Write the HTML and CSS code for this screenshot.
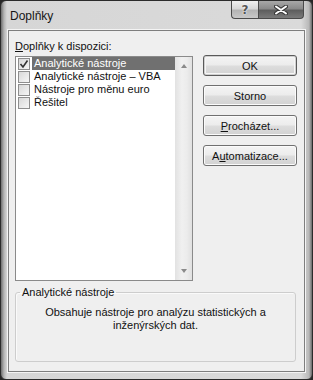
FILE: index.html
```html
<!DOCTYPE html>
<html>
  <head>
    <title>Doplňky</title>
    <link rel="stylesheet" href="styles.css">
  </head>
  <body>

	<div class="window">
		<div class="titlebar">
			<span class="title">Doplňky</span>
			<div class="caption">
				<span class="cap-btn help">?</span>
				<span class="cap-btn close">
					<svg width="14" height="10" viewBox="0 0 14 10">
						<path d="M2 1.5 L12 8.5 M12 1.5 L2 8.5" stroke="#3a3a3a" stroke-width="4" stroke-linecap="round"/>
						<path d="M2 1.5 L12 8.5 M12 1.5 L2 8.5" stroke="#fff" stroke-width="2" stroke-linecap="round"/>
					</svg>
				</span>
			</div>
		</div>

		<div class="client">
			<div class="top">
				<div class="left">
					<div class="label"><u>D</u>oplňky k dispozici:</div>
					<div class="listbox">
						<ul class="items">
							<li class="item selected">
								<span class="check">
									<svg width="10" height="10" viewBox="0 0 10 10">
										<path d="M1.5 5 L4 8 L8.5 1.5" fill="none" stroke="#333" stroke-width="1.6"/>
									</svg>
								</span>
								<span class="text">Analytické nástroje</span>
							</li>
							<li class="item"><span class="check"></span><span class="text">Analytické nástroje – VBA</span></li>
							<li class="item"><span class="check"></span><span class="text">Nástroje pro měnu euro</span></li>
							<li class="item"><span class="check"></span><span class="text">Řešitel</span></li>
						</ul>
						<div class="scrollbar">
							<span class="arrow up"></span>
							<span class="arrow down"></span>
						</div>
					</div>
				</div>
				<div class="buttons">
					<button class="btn default">OK</button>
					<button class="btn">Storno</button>
					<button class="btn"><u>P</u>rocházet...</button>
					<button class="btn">A<u>u</u>tomatizace...</button>
				</div>
			</div>

			<fieldset class="group">
				<legend>Analytické nástroje</legend>
				<p class="desc">Obsahuje nástroje pro analýzu statistických a<br>inženýrských dat.</p>
			</fieldset>
		</div>
	</div>

  </body>
</html>
```

FILE: styles.css
```css
body { margin: 0; background: #262626; font-family: "Liberation Sans", Arial, sans-serif; font-size: 11px; color: #111; }

.window { width: 313px; height: 380px; box-sizing: border-box; border: 1px solid #2b2b2b; border-radius: 6px; display: flex; flex-direction: column; overflow: hidden;
	background: linear-gradient(to right, #6e6e6e 0, #b4b4b4 3px, #d6d6d6 6px, #dadada 300px, #b8b8b8 308px, #6a6a6a 311px); }

.titlebar { height: 29px; flex: none; display: flex; align-items: flex-start; padding: 0 8px 0 9px; }
.title { font-size: 12px; line-height: 30px; color: #151515; }
.caption { margin-left: auto; display: flex; }
.cap-btn { height: 18px; box-sizing: border-box; border: 1px solid #4a4a4a; border-top: none; display: flex; align-items: center; justify-content: center; }
.help { width: 27px; border-radius: 0 0 0 4px; border-right: none; background: linear-gradient(#f0f0f0, #d8d8d8 45%, #b4b4b4 55%, #c8c8c8);
	font: bold 12px "DejaVu Sans", sans-serif; color: #555; text-shadow: 0 0 2px #fff, 0 0 1px #fff; }
.close { width: 46px; border-radius: 0 0 4px 0; background: linear-gradient(#a8a8a8, #8a8a8a 45%, #5e5e5e 55%, #7a7a7a); }

.client { flex: 1; margin: 0 7px 7px; background: #efefef; border: 1px solid #7e7e7e; box-shadow: 0 0 0 1px #f4f4f4; display: flex; flex-direction: column; padding: 8px 7px 9px 6px; }

.top { display: flex; gap: 10px; }
.left { width: 178px; }
.label { height: 17px; line-height: 15px; }

.listbox { height: 225px; box-sizing: border-box; border: 1px solid #8a8a8a; background: #fff; display: flex; }
.items { list-style: none; margin: 0; padding: 0; flex: 1; }
.item { height: 13px; display: flex; align-items: center; }
.check { width: 12px; height: 12px; box-sizing: border-box; margin: 0 2px 0 2px; border: 1px solid #8e8e8e; background: linear-gradient(135deg, #d8d8d8, #f6f6f6); display: flex; align-items: center; justify-content: center; }
.text { flex: 1; height: 13px; line-height: 13px; padding-left: 2px; white-space: nowrap; }
.selected .text { background: #707070; color: #fff; }

.scrollbar { width: 17px; display: flex; flex-direction: column; justify-content: space-between; align-items: center; padding: 7px 0; box-sizing: border-box;
	background: linear-gradient(to right, #e2e2e2, #f0f0f0 40%, #ececec 70%, #e0e0e0); }
.arrow { width: 0; height: 0; border-left: 3.5px solid transparent; border-right: 3.5px solid transparent; }
.arrow.up { border-bottom: 4px solid #8a8a8a; }
.arrow.down { border-top: 4px solid #8a8a8a; }

.buttons { padding-top: 16px; display: flex; flex-direction: column; gap: 9px; }
.btn { width: 94px; height: 21px; padding: 0; font: 11px "Liberation Sans", Arial, sans-serif; color: #111; border: 1px solid #707070; border-radius: 3px;
	background: linear-gradient(#f4f4f4, #ececec 48%, #dddddd 52%, #d2d2d2); box-shadow: inset 0 0 0 1px #fbfbfb; }
.btn.default { border-color: #5a5a5a; box-shadow: inset 0 0 0 1px #cfcfcf, inset 0 0 0 2px #f6f6f6; }

.group { flex: 1; margin: 4px 1px 0 0; padding: 7px 0 0; border: 1px solid #cdcdcd; border-radius: 3px; box-shadow: inset 1px 1px 0 #fafafa; min-width: 0; }
.group legend { margin-left: 4px; padding: 0 2px; line-height: 14px; }
.desc { margin: 0; text-align: center; line-height: 13px; }
```
